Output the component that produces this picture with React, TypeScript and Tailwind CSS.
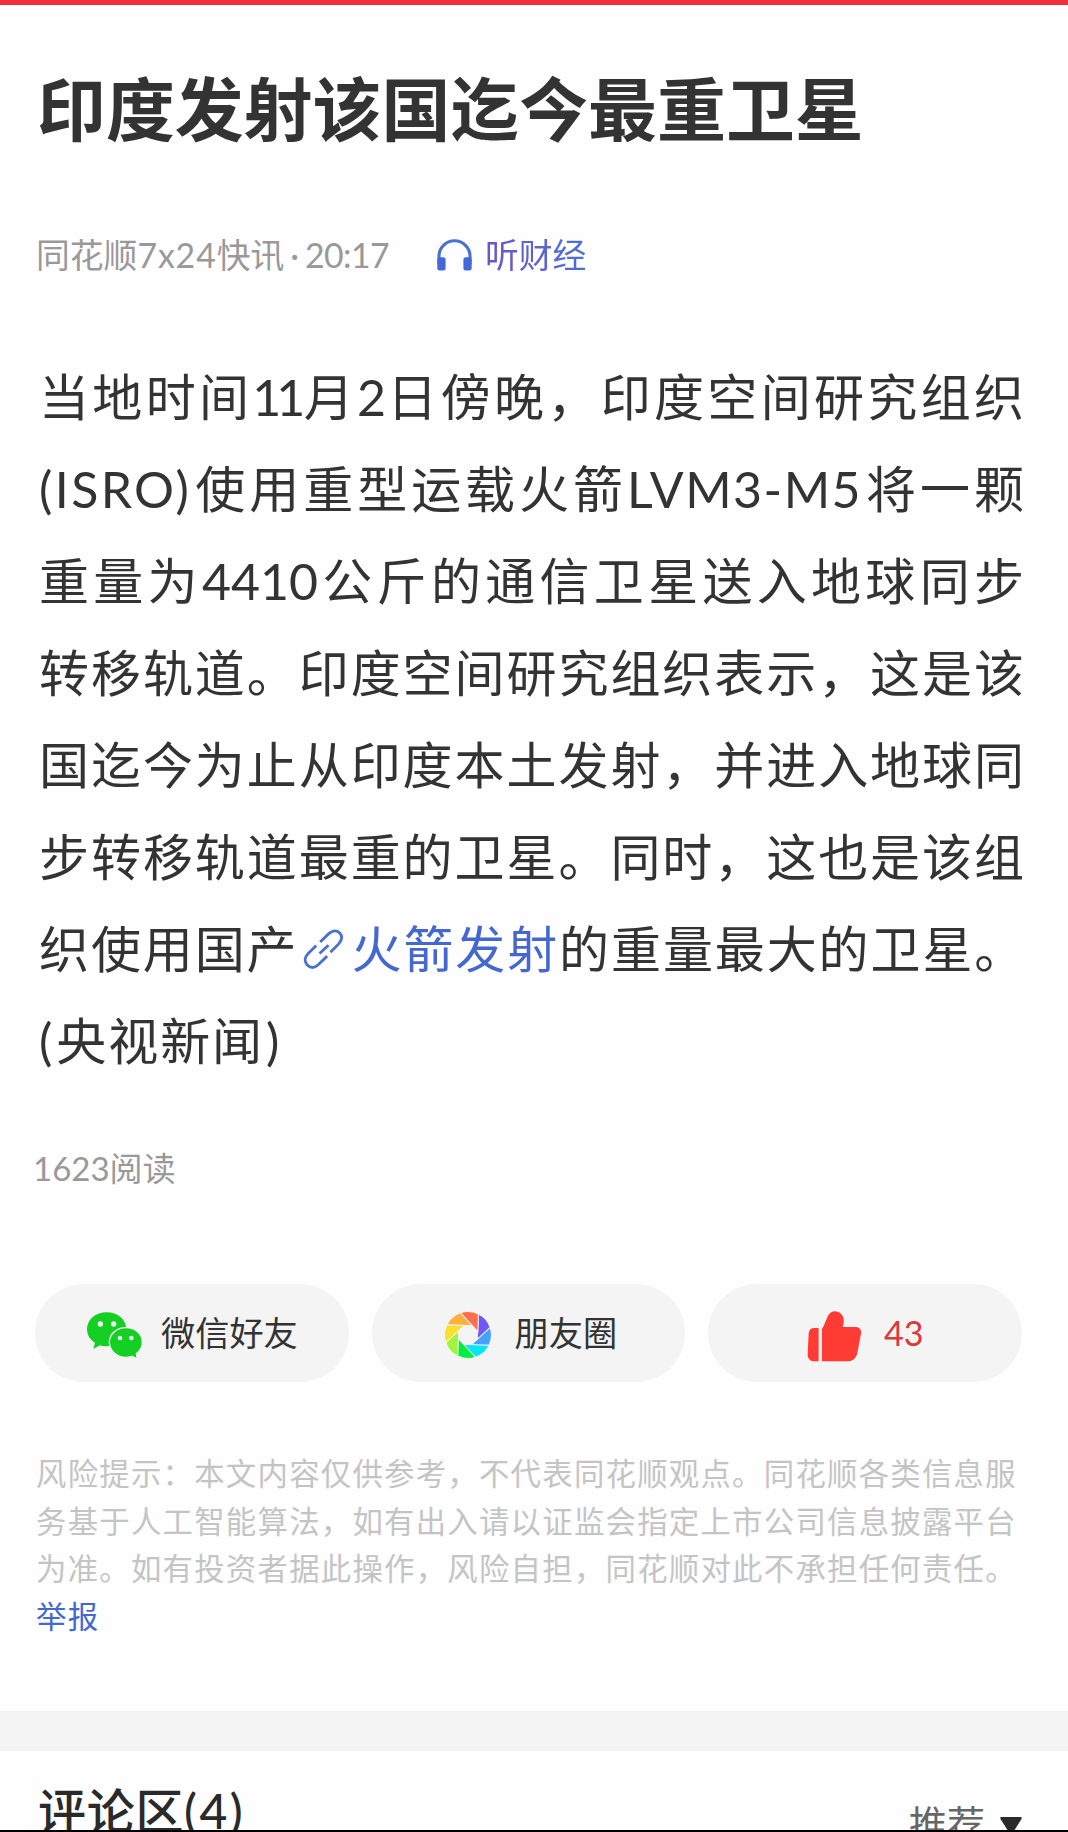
import React from "react";

const bladeColors = [
  "#7058f8",
  "#45a0ff",
  "#00e8f8",
  "#00ef3e",
  "#a0f43a",
  "#f8e02c",
  "#ffb040",
  "#ff6e4c",
];

const HeadphonesIcon = () => (
  <svg viewBox="51 60 106 96" className="w-[35px] h-8 shrink-0" fill="none">
    <path
      d="M57 136V112a47 47 0 0 1 94 0v24"
      stroke="#4a70d2"
      strokeWidth="9.5"
    />
    <rect x="52" y="115" width="25" height="40" rx="7" fill="#4468d8" />
    <rect x="131" y="115" width="25" height="40" rx="7" fill="#4468d8" />
  </svg>
);

const LinkIcon = () => (
  <svg
    viewBox="69 86 124 124"
    className="inline-block w-[41px] h-[41px] ml-[4px] mr-[8px] -mt-[11px] align-middle"
    fill="none"
    stroke="#4a70d2"
    strokeWidth="8.5"
  >
    <path d="M121 125L147 100C158 90 172 89 180 98C189 108 187 120 177 131L152 156" />
    <path d="M109 136L84 161C73 172 73 185 82 195C92 205 104 204 115 194L142 168" />
    <path d="M119 160L146 135" />
  </svg>
);

const WechatIcon = () => (
  <svg viewBox="81 65 168 144" className="w-14 h-12 mt-[5px] shrink-0">
    <path
      d="M140 66c33 0 59 22 59 51s-26 51-59 51c-8 0-14-1-20-3l-20 11 5-19c-15-9-24-23-24-40 0-29 26-51 59-51z"
      fill="#14d022"
    />
    <path
      d="M198 112c28 0 49 19 49 44 0 14-7 26-18 34l3 16-16-8c-6 2-12 3-18 3-28 0-50-20-50-45s22-44 50-44z"
      fill="#14d022"
      stroke="#f4f4f4"
      strokeWidth="4"
    />
    <circle cx="121" cy="101" r="8" fill="#f4f4f4" />
    <circle cx="161" cy="101" r="8" fill="#f4f4f4" />
    <circle cx="180" cy="143" r="7" fill="#f4f4f4" />
    <circle cx="214" cy="143" r="7" fill="#f4f4f4" />
  </svg>
);

const MomentsIcon = () => (
  <svg viewBox="-72 -72 144 144" className="w-12 h-12 mt-[3px] shrink-0">
    {bladeColors.map((color, i) => (
      <path
        key={color}
        d="M31 -63A70 70 0 0 1 66.5 -22.6L28 14Z"
        fill={color}
        stroke="#f4f4f4"
        strokeWidth="3"
        transform={`rotate(${i * 45})`}
      />
    ))}
    <circle r="27" fill="#f4f4f4" />
  </svg>
);

const ThumbIcon = () => (
  <svg
    viewBox="323 123 164 154"
    className="w-[55px] h-[51px] mt-[7px] shrink-0"
    fill="#ff3c33"
  >
    <path d="M357 174V275H346C332 275 324 267 324 254L327 190C328 179 334 174 344 174Z" />
    <path d="M367 275V177C374 169 377 155 385 138C392 122 413 119 425 132C434 141 435 153 430 171H468C481 171 487 180 485 192L474 250C470 266 460 275 445 275Z" />
  </svg>
);

const bodyLines = [
  <>
    当地时间<span className="tracking-[-5px]">11</span>月
    <span className="tracking-[-2px]">2</span>日傍晚，印度空间研究组织
  </>,
  <>
    <span className="tracking-[2.4px]">(ISRO)</span>使用重型运载火箭
    <span className="tracking-[1.5px]">LVM3-M5</span>将一颗
  </>,
  <>重量为4410公斤的通信卫星送入地球同步</>,
  <>转移轨道。印度空间研究组织表示，这是该</>,
  <>国迄今为止从印度本土发射，并进入地球同</>,
  <>步转移轨道最重的卫星。同时，这也是该组</>,
];

const riskLines = [
  "风险提示：本文内容仅供参考，不代表同花顺观点。同花顺各类信息服",
  "务基于人工智能算法，如有出入请以证监会指定上市公司信息披露平台",
  "为准。如有投资者据此操作，风险自担，同花顺对此不承担任何责任。",
];

const App = () => {
  return (
    <div className="w-[1068px] h-[1832px] overflow-hidden flex flex-col bg-[#fefefe] border-t-[5px] border-t-[#f12f38] border-b-2 border-b-black font-[Lato,'Noto_Sans_CJK_SC',sans-serif] text-[#333] whitespace-nowrap">
      {/* Headline */}
      <h1 className="mt-[60px] ml-[37px] h-[90px] leading-[90px] text-[68.9px] font-bold">
        印度发射该国迄今最重卫星
      </h1>

      {/* Source and audio link */}
      <div className="mt-[75px] ml-9 h-[50px] flex items-center text-[33.8px] leading-[50px]">
        <div className="w-[353px] flex text-[#999]">
          <span>
            同花顺<span className="tracking-[0.9px]">7x24</span>快讯
          </span>
          <span className="mx-[6px]">·</span>
          <span className="tracking-[-0.6px]">20:17</span>
        </div>
        <div className="ml-12 flex items-center gap-[13px]">
          <HeadphonesIcon />
          <span className="bg-linear-to-r from-[#6a55cc] to-[#4a70d2] bg-clip-text text-transparent">
            听财经
          </span>
        </div>
      </div>

      {/* Article body */}
      <article className="mt-[71px] ml-[39px] w-[985px] text-[50px] leading-[92px]">
        {bodyLines.map((line, i) => (
          <p key={i} className="[text-align-last:justify]">
            {line}
          </p>
        ))}
        <p className="tracking-[1.9px]">
          织使用国产
          <LinkIcon />
          <a className="text-[#4468d0]">火箭发射</a>
          的重量最大的卫星。
        </p>
        <p className="tracking-[1.9px]">
          <span className="tracking-[4px]">(</span>央视新闻
          <span className="ml-[2px]">)</span>
        </p>
      </article>

      <p className="mt-[57px] ml-[33px] h-12 leading-12 text-[33px] text-[#999]">
        1623阅读
      </p>

      {/* Share buttons */}
      <div className="mt-[92px] ml-[35px] flex gap-[23px] text-[34.2px]">
        <button className="w-[313.5px] h-[98px] rounded-full bg-[#f4f4f4] flex items-center pl-[52px] gap-[18px]">
          <WechatIcon />
          微信好友
        </button>
        <button className="w-[313.5px] h-[98px] rounded-full bg-[#f4f4f4] flex items-center pl-[72px] gap-[23px]">
          <MomentsIcon />
          朋友圈
        </button>
        <button className="w-[313.5px] h-[98px] rounded-full bg-[#f4f4f4] flex items-center pl-[99px] gap-[22px] text-[#d93a3a]">
          <ThumbIcon />
          43
        </button>
      </div>

      {/* Risk notice */}
      <div className="mt-[68px] ml-9 text-[30.4px] tracking-[1.25px] leading-[47.6px] text-[#c4c4c4]">
        {riskLines.map((line) => (
          <p key={line}>{line}</p>
        ))}
        <a className="block text-[#4468d0]">举报</a>
      </div>

      <div className="mt-[71px] h-10 shrink-0 bg-[#f4f4f4]" />

      {/* Comments header, cut off by the bottom edge */}
      <div className="h-[79px] pl-[38px] pr-[46px] flex items-start justify-between">
        <h2 className="mt-[30px] text-[48px] leading-[60px] font-medium tracking-[0.7px] text-[#2a2a2a]">
          评论区<span className="tracking-[2.4px]">(4)</span>
        </h2>
        <div className="mt-[47px] flex items-start text-[38px] leading-[50px] text-[#666]">
          推荐
          <svg
            viewBox="0 0 22 22"
            className="mt-[19px] ml-[15px] w-[22px] h-[22px]"
            fill="#2a2a2a"
          >
            <path d="M1 0H21Q22 0 21.500 2L12 17Q11 18 10 17L.5 2Q0 0 1 0Z" />
          </svg>
        </div>
      </div>
    </div>
  );
};

export default App;
